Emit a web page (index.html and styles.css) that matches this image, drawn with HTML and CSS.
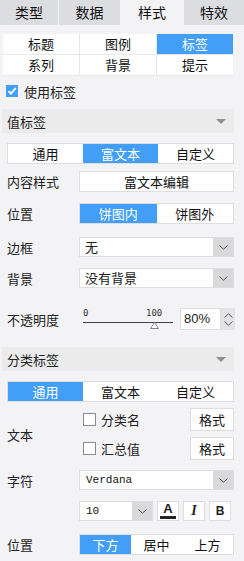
FILE: index.html
```html
<!DOCTYPE html>
<html lang="zh">
<head>
    <meta charset="UTF-8">
    <title>标签设置</title>
    <link rel="stylesheet" href="styles.css">
</head>
<body>
    <div class="panel">
        <div class="tabs">
            <div class="tab">类型</div>
            <div class="tab">数据</div>
            <div class="tab active">样式</div>
            <div class="tab">特效</div>
        </div>

        <div class="sub-grid">
            <div class="cell">标题</div>
            <div class="cell">图例</div>
            <div class="cell active">标签</div>
            <div class="cell">系列</div>
            <div class="cell">背景</div>
            <div class="cell">提示</div>
        </div>

        <label class="use-label">
            <span class="check on">
                <svg width="12" height="12" viewBox="0 0 12 12"><path d="M2.5 6.2 L5 8.7 L9.8 3" fill="none" stroke="#fff" stroke-width="1.8"/></svg>
            </span>
            使用标签
        </label>

        <!-- 值标签 -->
        <div class="group-head">值标签<span class="caret"></span></div>

        <div class="seg full mt-10">
            <div class="seg-item">通用</div>
            <div class="seg-item active">富文本</div>
            <div class="seg-item">自定义</div>
        </div>

        <div class="row mt-7">
            <div class="row-label">内容样式</div>
            <div class="btn wide">富文本编辑</div>
        </div>

        <div class="row mt-11">
            <div class="row-label">位置</div>
            <div class="seg ctrl">
                <div class="seg-item active">饼图内</div>
                <div class="seg-item">饼图外</div>
            </div>
        </div>

        <div class="row mt-13">
            <div class="row-label">边框</div>
            <div class="select ctrl">
                <span class="select-val">无</span>
                <span class="select-arrow"><svg width="9" height="5" viewBox="0 0 9 5"><path d="M0.5 0.5 L4.5 4.2 L8.5 0.5" fill="none" stroke="#555" stroke-width="1"/></svg></span>
            </div>
        </div>

        <div class="row mt-11">
            <div class="row-label">背景</div>
            <div class="select ctrl">
                <span class="select-val">没有背景</span>
                <span class="select-arrow"><svg width="9" height="5" viewBox="0 0 9 5"><path d="M0.5 0.5 L4.5 4.2 L8.5 0.5" fill="none" stroke="#555" stroke-width="1"/></svg></span>
            </div>
        </div>

        <div class="row mt-20">
            <div class="row-label">不透明度</div>
            <div class="slider">
                <span class="tick t0">0</span>
                <span class="tick t100">100</span>
                <span class="track"></span>
                <svg class="thumb" width="9" height="7" viewBox="0 0 9 7"><path d="M4.5 0.5 L8.5 6.5 L0.5 6.5 Z" fill="#fff" stroke="#888" stroke-width="1"/></svg>
            </div>
            <div class="spin">
                <span class="spin-val">80%</span>
                <span class="spin-btns">
                    <svg width="9" height="5" viewBox="0 0 9 5"><path d="M0.5 4.5 L4.5 0.8 L8.5 4.5" fill="none" stroke="#555" stroke-width="1"/></svg>
                    <svg width="9" height="5" viewBox="0 0 9 5"><path d="M0.5 0.5 L4.5 4.2 L8.5 0.5" fill="none" stroke="#555" stroke-width="1"/></svg>
                </span>
            </div>
        </div>

        <!-- 分类标签 -->
        <div class="group-head mt-17">分类标签<span class="caret"></span></div>

        <div class="seg full mt-10">
            <div class="seg-item active">通用</div>
            <div class="seg-item">富文本</div>
            <div class="seg-item">自定义</div>
        </div>

        <div class="row text-row">
            <div class="row-label">文本</div>
            <div class="text-opts">
                <div class="opt">
                    <span class="check"></span>
                    <span class="opt-name">分类名</span>
                    <div class="btn small">格式</div>
                </div>
                <div class="opt">
                    <span class="check"></span>
                    <span class="opt-name">汇总值</span>
                    <div class="btn small">格式</div>
                </div>
            </div>
        </div>

        <div class="row mt-10">
            <div class="row-label">字符</div>
            <div class="select ctrl">
                <span class="select-val font-name">Verdana</span>
                <span class="select-arrow"><svg width="9" height="5" viewBox="0 0 9 5"><path d="M0.5 0.5 L4.5 4.2 L8.5 0.5" fill="none" stroke="#555" stroke-width="1"/></svg></span>
            </div>
        </div>

        <div class="row mt-11">
            <div class="row-label"></div>
            <div class="select size">
                <span class="select-val font-name">10</span>
                <span class="select-arrow"><svg width="9" height="5" viewBox="0 0 9 5"><path d="M0.5 0.5 L4.5 4.2 L8.5 0.5" fill="none" stroke="#555" stroke-width="1"/></svg></span>
            </div>
            <div class="tool color"><span class="color-a">A</span><span class="color-bar"></span></div>
            <div class="tool italic">I</div>
            <div class="tool bold">B</div>
        </div>

        <div class="row mt-13">
            <div class="row-label">位置</div>
            <div class="seg ctrl">
                <div class="seg-item active">下方</div>
                <div class="seg-item">居中</div>
                <div class="seg-item">上方</div>
            </div>
        </div>
    </div>
</body>
</html>
```

FILE: styles.css
```css
*{margin: 0; padding: 0; box-sizing: border-box;}

body{
    background-color: #f3f3f6;
    font-family: "Noto Sans CJK SC", "Noto Sans", sans-serif;
    font-size: 13px;
    color: #222;
}

.panel{
    width: 244px;
    height: 561px;
    overflow: hidden;
}

.mt-7{margin-top: 7px;}
.mt-10{margin-top: 10px;}
.mt-11{margin-top: 11px;}
.mt-13{margin-top: 13px;}
.mt-17{margin-top: 17px;}
.mt-20{margin-top: 20px;}

/* top tabs */
.tabs{
    display: grid;
    grid-template-columns: 58px 61px 62px 60px;
    column-gap: 1px;
    height: 25px;
}

.tab{
    background-color: #dcdde0;
    text-align: center;
    line-height: 25px;
    font-size: 14px;
    color: #111;
}

.tab.active{background-color: #f3f3f6;}

/* sub menu */
.sub-grid{
    display: grid;
    grid-template-columns: 76px 76px 76px;
    grid-auto-rows: 20px;
    gap: 1px;
    width: 230px;
    margin: 9px 0 0 3px;
    background-color: #e8e8ea;
    border: 1px solid #e8e8ea;
    border-top: 0;
    border-left: 0;
}

.cell{
    background-color: #fff;
    text-align: center;
    line-height: 20px;
    color: #111;
}

.cell.active{
    background-color: #429ef7;
    color: #fff;
}

/* checkbox */
.use-label{
    display: flex;
    align-items: center;
    gap: 6px;
    margin: 8px 0 0 6px;
    height: 14px;
}

.check{
    display: inline-flex;
    width: 12px;
    height: 12px;
    border: 1px solid #8a8a8a;
    background-color: #fff;
    flex-shrink: 0;
}

.check.on{
    border: 0;
    background-color: #429ef7;
}

/* group header */
.group-head{
    display: flex;
    align-items: center;
    justify-content: space-between;
    margin: 11px 10px 0 2px;
    height: 24px;
    padding: 0 8px 0 5px;
    background-color: #ebebec;
    font-size: 13px;
}

.group-head.mt-17{margin-top: 17px;}

.caret{
    width: 0;
    height: 0;
    border-left: 5px solid transparent;
    border-right: 5px solid transparent;
    border-top: 5px solid #8f8f8f;
}

/* segmented */
.seg{
    display: flex;
    height: 21px;
    background-color: #fff;
    border: 1px solid #dedee0;
}

.seg.full{
    width: 227px;
    margin-left: 7px;
}

.seg-item{
    flex: 1;
    text-align: center;
    line-height: 19px;
    color: #111;
}

.seg-item.active{
    background-color: #429ef7;
    color: #fff;
}

/* form rows */
.row{
    display: flex;
    align-items: center;
    padding-left: 7px;
}

.row-label{
    width: 72px;
    flex-shrink: 0;
}

.ctrl{width: 155px;}

.btn{
    height: 22px;
    line-height: 20px;
    background-color: #fff;
    border: 1px solid #dedee0;
    text-align: center;
    color: #111;
}

.btn.wide{width: 155px; height: 21px; line-height: 19px;}

.select{
    display: flex;
    height: 20px;
    background-color: #fff;
    border: 1px solid #dedee0;
}

.select-val{
    flex: 1;
    padding-left: 5px;
    line-height: 18px;
}

.select-arrow{
    display: flex;
    align-items: center;
    justify-content: center;
    width: 20px;
    background-color: #d9d9dc;
}

.font-name{
    padding-left: 6px;
    font-family: "Liberation Mono", monospace;
    font-size: 11px;
    color: #111;
}

/* slider */
.slider{
    position: relative;
    width: 94px;
    height: 22px;
    margin-left: 4px;
}

.tick{
    position: absolute;
    top: 0;
    font-family: "DejaVu Sans Mono", monospace;
    font-size: 9px;
    line-height: 10px;
    color: #333;
}

.t0{left: 0;}
.t100{left: 63px;}

.track{
    position: absolute;
    left: 0;
    top: 14px;
    width: 90px;
    height: 1px;
    background-color: #444;
}

.thumb{
    position: absolute;
    left: 67px;
    top: 14px;
}

.spin{
    display: flex;
    margin-left: 3px;
    height: 22px;
    width: 55px;
}

.spin-val{
    width: 41px;
    background-color: #fff;
    border: 1px solid #dedee0;
    padding-left: 3px;
    line-height: 20px;
    font-family: "Liberation Sans", sans-serif;
    font-size: 13px;
}

.spin-btns{
    display: flex;
    flex-direction: column;
    align-items: center;
    justify-content: space-around;
    width: 14px;
    background-color: #e4e4e6;
    padding: 3px 0;
}

/* text options */
.text-row{margin-top: 6px;}

.text-opts{
    display: flex;
    flex-direction: column;
    gap: 6px;
    width: 155px;
}

.opt{
    display: flex;
    align-items: center;
    height: 23px;
    padding-left: 4px;
}

.opt .check{
    width: 13px;
    height: 13px;
}

.opt-name{
    flex: 1;
    margin-left: 5px;
}

.btn.small{
    width: 44px;
    height: 23px;
    line-height: 21px;
}

/* font tools */
.select.size{width: 74px;}

.tool{
    width: 22px;
    height: 20px;
    margin-left: 4px;
    background-color: #fff;
    border: 1px solid #dedee0;
    text-align: center;
    line-height: 18px;
    color: #222;
}

.color{
    display: flex;
    flex-direction: column;
    align-items: center;
    padding-top: 1px;
}

.color-a{
    font-family: "Liberation Sans", sans-serif;
    font-weight: bold;
    font-size: 13px;
    line-height: 12px;
}

.color-bar{
    width: 16px;
    height: 3px;
    background-color: #222;
    margin-top: 1px;
}

.italic{
    font-family: "Liberation Serif", serif;
    font-style: italic;
    font-weight: bold;
    font-size: 14px;
}

.bold{
    font-family: "Liberation Sans", sans-serif;
    font-weight: bold;
    font-size: 12px;
}
```
